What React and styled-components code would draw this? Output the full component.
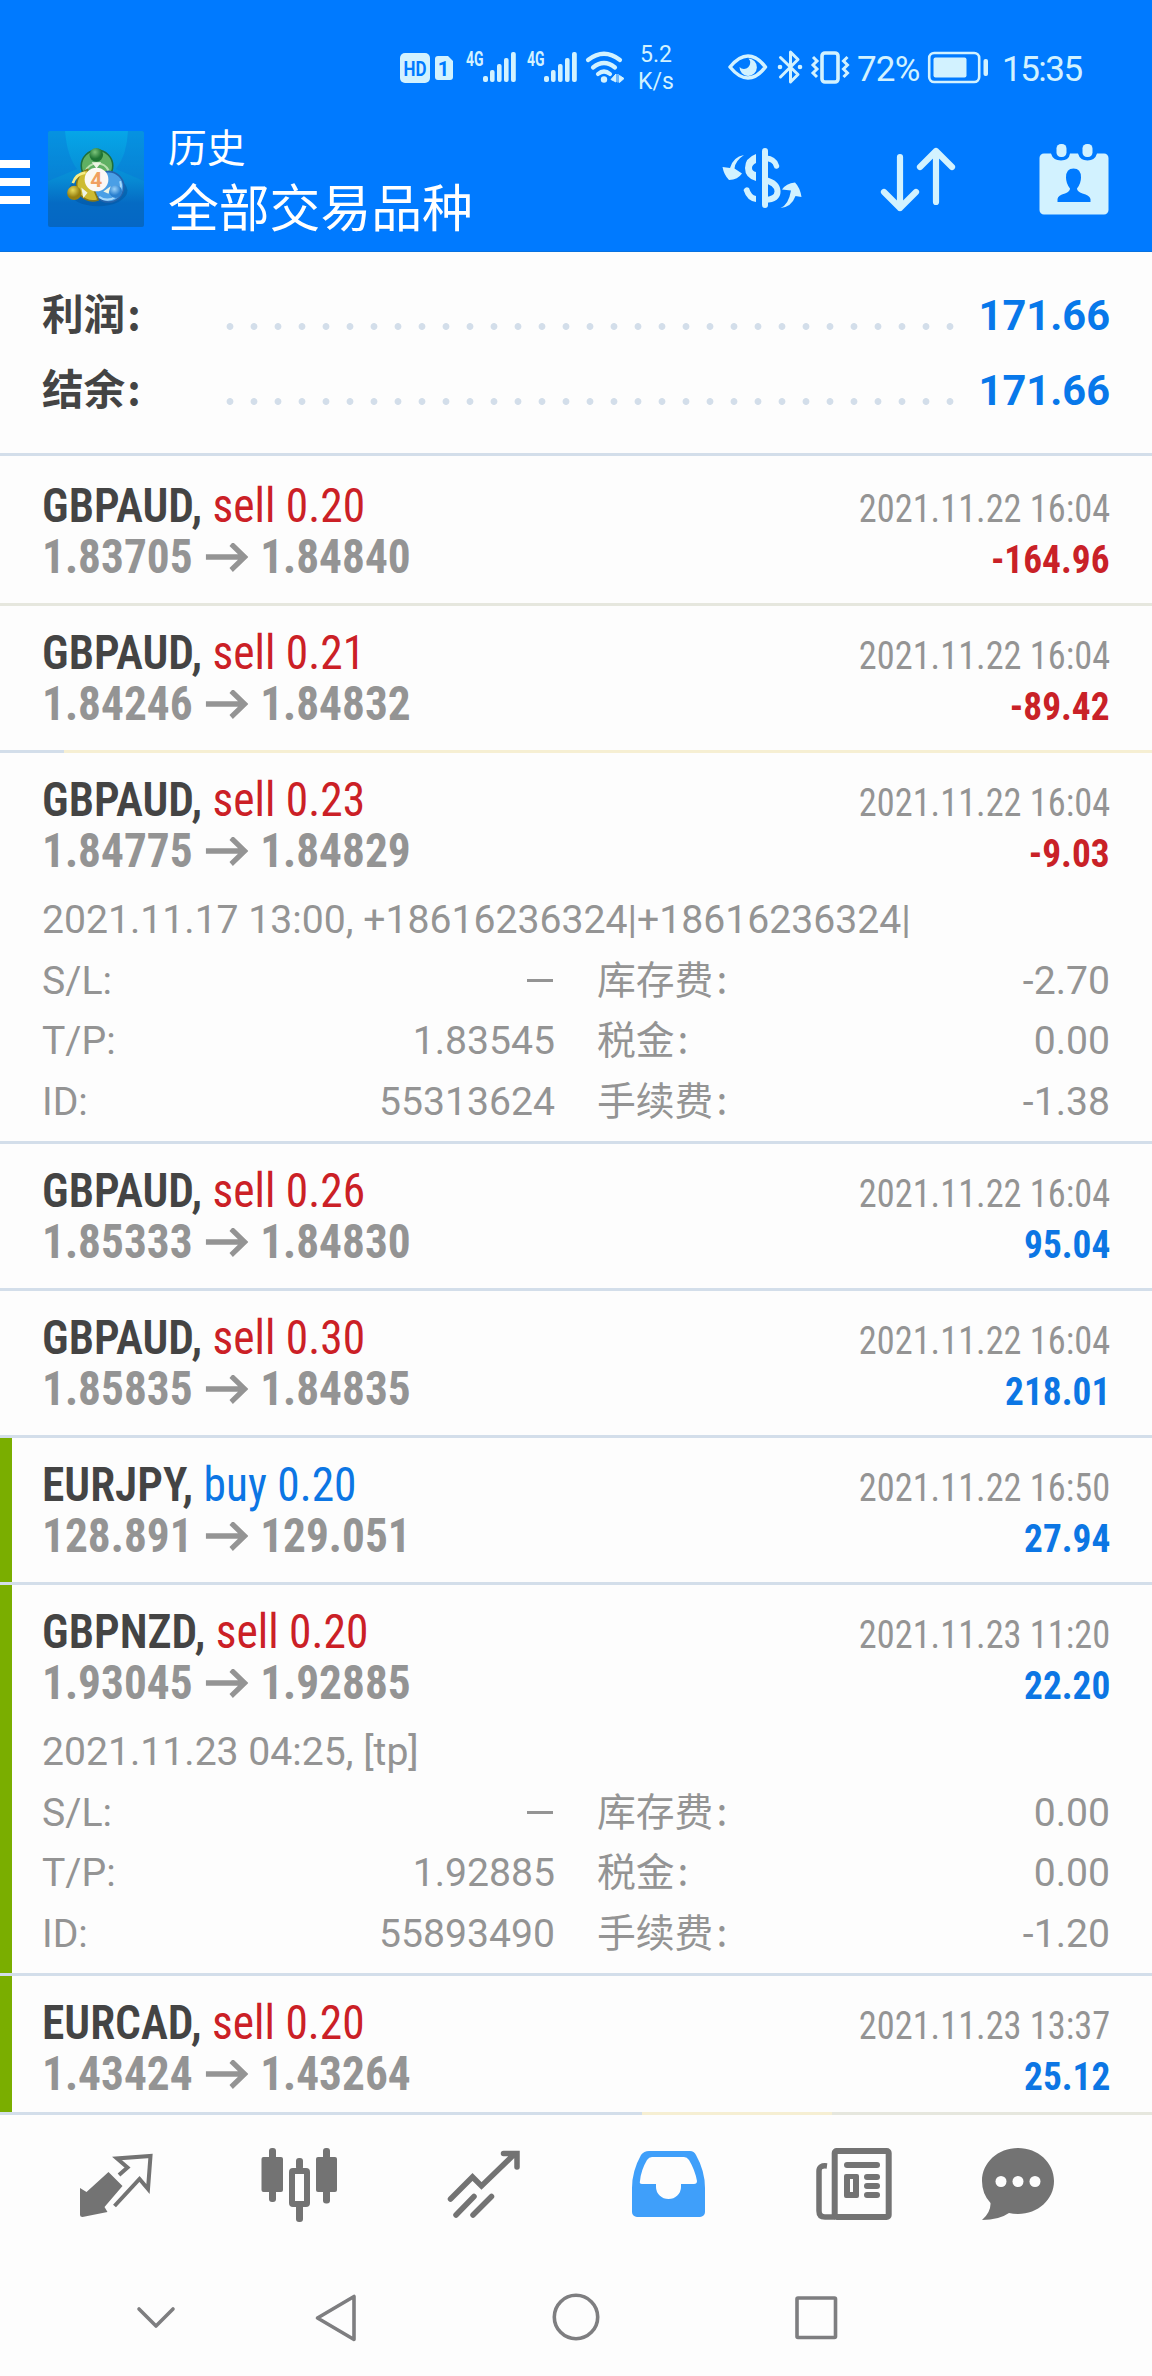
import React from "react";
import styled, { createGlobalStyle } from "styled-components";

const BLUE = "#007aff";
const ICE = "#d2f2ff";
const GREY = "#949494";
const LINE = "#d3deea";
const SAND = "#f6efd3";
const latin = `Roboto, "Noto Sans CJK SC", sans-serif`;
const cjk = `"Noto Sans CJK SC", Roboto, sans-serif`;

const Global = createGlobalStyle`
  *, *::before, *::after { box-sizing: border-box; }
  body { margin: 0; background: #fdfdfd; font-family: ${latin}; }
  svg { display: block; flex: none; }
`;

const Screen = styled.div`
  width: 1152px;
  height: 2376px;
  display: flex;
  flex-direction: column;
  overflow: hidden;
  background: #fdfdfd;
`;

/* ---------- top area ---------- */
const Top = styled.header`
  flex: none;
  height: 252px;
  background: ${BLUE};
  border-bottom: 1px solid #0872e0;
`;
const StatusBar = styled.div`
  height: 126px;
  display: flex;
  align-items: flex-start;
  padding: 40px 0 0 400px;
  color: ${ICE};
`;
const Speed = styled.div`
  width: 38px;
  margin: 1px 50px 0 9px;
  font-size: 23px;
  line-height: 27px;
  text-align: center;
`;
const StatusText = styled.span`
  margin-left: ${(p) => p.$gap}px;
  width: ${(p) => p.$w}px;
  font-size: 35px;
  line-height: 59px;
  letter-spacing: ${(p) => p.$ls}px;
  white-space: nowrap;
`;
const AppBar = styled.div`
  height: 125px;
  display: flex;
  align-items: flex-start;
`;
const Menu = styled.div`
  width: 30px;
  padding-top: 34px;
  display: flex;
  flex-direction: column;
  gap: 10px;
`;
const MenuBar = styled.span`
  height: 8px;
  background: #fff;
`;
const Logo = styled.div`
  width: 96px;
  height: 96px;
  margin: 5px 0 0 18px;
`;
const Titles = styled.div`
  width: 532px;
  margin-left: 24px;
  color: #fff;
  font-family: ${cjk};
  white-space: nowrap;
`;
const Subtitle = styled.div`
  font-size: 38.8px;
  line-height: 38px;
`;
const Title = styled.div`
  padding-top: 5px;
  font-size: 50.8px;
  line-height: 72px;
`;
const Actions = styled.div`
  flex: 1;
  display: flex;
  height: 125px;
`;

/* ---------- summary ---------- */
const Summary = styled.section`
  flex: none;
  height: 204px;
  padding: 26px 42px 0;
  border-bottom: 3px solid ${LINE};
`;
const SummaryRow = styled.div`
  height: 75px;
  display: flex;
  align-items: baseline;
  line-height: 75px;
  font-weight: 700;
  font-size: 41.6px;
`;
const SummaryLabel = styled.span`
  width: 176px;
  color: #444;
  font-family: ${cjk};
  line-height: 60px;
`;
const Colon = styled.span`
  margin-left: ${(p) => p.$gap}px;
`;
const Dots = styled.span`
  width: 744px;
  height: 7px;
  margin-bottom: 11px;
  background: radial-gradient(circle at 12px 3.5px, ${LINE} 3px, transparent 3.8px) 0 0 / 24px 7px repeat-x;
`;
const SummaryValue = styled.span`
  flex: 1;
  text-align: right;
  color: #0878ea;
  font-weight: 700;
`;

/* ---------- deals ---------- */
const List = styled.main`
  flex: none;
  height: 1656px;
  overflow: hidden;
`;
const Deal = styled.article`
  display: flex;
  height: ${(p) => (p.$open ? 391 : 147)}px;
  border-top: 3px solid ${(p) => p.$line};
  border-image: ${(p) => p.$split || "none"};
`;
const Marker = styled.span`
  flex: none;
  width: 12px;
  background: ${(p) => (p.$on ? "#7aae00" : "transparent")};
`;
const DealBody = styled.div`
  flex: 1;
  padding: 21px 42px 0 30px;
`;
const Line = styled.div`
  display: flex;
  justify-content: space-between;
  align-items: baseline;
  height: 51px;
  line-height: 51px;
  font-stretch: 75%;
  white-space: nowrap;
`;
const Symbol = styled.span`
  font-size: 49px;
  font-weight: 650;
  color: #444;
  transform: scaleX(0.927);
  transform-origin: left;
`;
const Side = styled.span`
  font-weight: 400;
  color: ${(p) => (p.$buy ? "#0c76e4" : "#cb2026")};
`;
const Price = styled.span`
  display: flex;
  align-items: baseline;
  font-size: 49px;
  font-weight: 700;
  color: ${GREY};
  transform: scaleX(0.925);
  transform-origin: left;
`;
const PriceArrow = styled.svg`
  width: 46px;
  height: 30px;
  margin: 0 13px 0 14px;
`;
const Time = styled.span`
  font-size: 39.5px;
  color: ${GREY};
  transform: scaleX(0.92);
  transform-origin: right;
`;
const Profit = styled.span`
  font-size: 39.5px;
  font-weight: 700;
  color: ${(p) => (p.$loss ? "#c92127" : "#0c76e4")};
  transform: scaleX(0.945);
  transform-origin: right;
`;
const Details = styled.div`
  padding-top: 14px;
  font-size: 39.15px;
  color: ${GREY};
`;
const Comment = styled.div`
  height: 60.5px;
  line-height: 60.5px;
  white-space: nowrap;
`;
const DetailGrid = styled.div`
  display: grid;
  grid-template-columns: 513px 513px;
  grid-auto-rows: 60.7px;
  column-gap: 42px;
`;
const Field = styled.div`
  display: flex;
  justify-content: space-between;
  align-items: baseline;
  line-height: 61px;
`;
const FieldLabel = styled.span`
  font-family: ${(p) => (p.$cjk ? cjk : latin)};
  font-size: ${(p) => (p.$cjk ? 38.8 : 39.15)}px;
  line-height: ${(p) => (p.$cjk ? 50 : 61)}px;
`;
const Dash = styled.span`
  width: 26px;
  height: 3px;
  margin-right: 2px;
  align-self: center;
  background: ${GREY};
`;

/* ---------- bottom ---------- */
const Tabs = styled.nav`
  flex: none;
  height: 133px;
  display: flex;
  padding-left: 24px;
  border-top: 3px solid;
  border-image: linear-gradient(90deg, ${LINE} 642px, ${SAND} 642px, ${SAND} 832px, #e6e7de 832px) 3 0 0 0;
`;
const SystemNav = styled.nav`
  flex: none;
  height: 131px;
  display: flex;
  justify-content: center;
`;

const Cell = ({ x, y, w, h, children }) => (
  <svg width={w} height={h} viewBox={`${x} ${y} ${w} ${h}`} fill="none">{children}</svg>
);

const Bars = ({ x }) => (
  <g fill={ICE}>
    <text x={x} y="66" fontSize="20" fontWeight="700" fontFamily="Roboto, sans-serif" textLength="17.5" lengthAdjust="spacingAndGlyphs">4G</text>
    <rect x={x + 17} y="76" width="5" height="6" rx="2" />
    <rect x={x + 24} y="70" width="4.6" height="12" rx="2" />
    <rect x={x + 31} y="64" width="4.6" height="18" rx="2" />
    <rect x={x + 38} y="58" width="4.6" height="24" rx="2" />
    <rect x={x + 45} y="52" width="4.8" height="30" rx="2" />
  </g>
);

const Connectivity = () => (
  <Cell x={400} y={40} w={228} h={50}>
    <rect x="400" y="53" width="30" height="30" rx="5" fill={ICE} />
    <text x="403.5" y="75.5" fontSize="20" fontWeight="700" fill={BLUE} fontFamily="Roboto, sans-serif" textLength="23" lengthAdjust="spacingAndGlyphs">HD</text>
    <path d="M438 56h10l5 5v16a3 3 0 0 1-3 3h-12a3 3 0 0 1-3-3V59a3 3 0 0 1 3-3z" fill={ICE} />
    <text x="443.5" y="75.5" fontSize="20" fontWeight="700" fill={BLUE} fontFamily="Roboto, sans-serif" textAnchor="middle">1</text>
    <Bars x={466} />
    <Bars x={527} />
    <g stroke={ICE} strokeWidth="4.2" strokeLinecap="round">
      <path d="M588 60Q604 47.500 620 60" />
      <path d="M593 67.500Q604 58.500 615 67.500" />
      <path d="M598 74Q604 69 610 74" />
    </g>
    <circle cx="604" cy="79.500" r="3.200" fill={ICE} />
    <path d="M611 79.500l5-5.500v8zM618 74v8.500M619.500 75.500l4.500 3-4.500 4z" fill={ICE} stroke={ICE} strokeWidth="1" />
  </Cell>
);

const Indicators = () => (
  <Cell x={725} y={40} w={127} h={50}>
    <path d="M730 67Q739 56 748 56T765.500 67Q757 78 748 78T730 67z" stroke={ICE} strokeWidth="3.500" strokeLinejoin="round" />
    <path d="M748.500 58.500a8.700 8.700 0 1 1-9 8.500 6 6 0 0 0 9-8.500z" fill={ICE} />
    <path d="M780.500 57.500L798 74.500 790.500 82V52L798 59.500 780.500 77" stroke={ICE} strokeWidth="3" strokeLinejoin="round" strokeLinecap="round" />
    <circle cx="780" cy="67" r="2.300" fill={ICE} />
    <circle cx="800" cy="67" r="2.300" fill={ICE} />
    <rect x="822" y="53" width="16" height="29" rx="3" stroke={ICE} strokeWidth="3.600" />
    <path d="M813 57l4 4-4 4 4 4-4 4 4 4M847.500 57l-4 4 4 4-4 4 4 4-4 4" stroke={ICE} strokeWidth="3" />
  </Cell>
);

const Battery = () => (
  <Cell x={927} y={40} w={63} h={50}>
    <rect x="929.200" y="53" width="50" height="29" rx="5" stroke={ICE} strokeWidth="2.600" />
    <rect x="933.500" y="57.500" width="33" height="20" rx="2" fill={ICE} />
    <rect x="983.500" y="59" width="4.500" height="17" rx="2" fill={ICE} />
  </Cell>
);

const LogoArt = () => (
  <svg width="96" height="96" viewBox="48 131 96 96">
    <defs>
      <linearGradient id="sky" x1="0" y1="0" x2="0" y2="1">
        <stop offset="0" stopColor="#06a6e8" />
        <stop offset="0.500" stopColor="#078bd4" />
        <stop offset="0.750" stopColor="#056bc4" />
        <stop offset="1" stopColor="#0567c4" />
      </linearGradient>
      <radialGradient id="gr" cx="0.400" cy="0.300"><stop offset="0" stopColor="#7cc47a" /><stop offset="1" stopColor="#1f7433" /></radialGradient>
      <radialGradient id="ye" cx="0.400" cy="0.300"><stop offset="0" stopColor="#e9dc5c" /><stop offset="1" stopColor="#978010" /></radialGradient>
      <radialGradient id="bl" cx="0.400" cy="0.300"><stop offset="0" stopColor="#9ad2fa" /><stop offset="1" stopColor="#2a7fcf" /></radialGradient>
    </defs>
    <rect x="48" y="131" width="96" height="96" rx="2" fill="url(#sky)" />
    <path d="M48 131h17q2 25 12 38l-29 12zM144 131h-16q-1 24-12 38l28 12z" fill="#0876d6" opacity="0.400" />
    <g transform="translate(96.500 179.500) scale(1.050) translate(-96.500 -179.500)">
      <ellipse cx="98" cy="190" rx="28" ry="15" fill="#044f96" opacity="0.450" />
      <circle cx="97" cy="166.500" r="15" fill="#5fb063" stroke="#1f6f3c" strokeWidth="1.500" />
      <path d="M86 172a12 12 0 0 1 22-1" stroke="#b9e0ae" strokeWidth="2" fill="none" />
      <circle cx="108" cy="186.500" r="14.500" fill="#4a9fe6" stroke="#2463ac" strokeWidth="1.500" />
      <path d="M119 181a13 13 0 0 1-20 15" stroke="#a5d8fb" strokeWidth="2" fill="none" />
      <path d="M98 199a15 15 0 1 1-10-29l4 14z" fill="#cdbb31" stroke="#877716" strokeWidth="1.500" />
      <path d="M74 183q3-9 12-10" stroke="#f6ec86" strokeWidth="2.500" fill="none" />
      <path d="M92 163h9l-4.500 6zM82 187l6 5-4 5zM108 193l2-7-7 5z" fill="#eef4e4" />
      <circle cx="96.300" cy="156" r="6.500" fill="url(#gr)" />
      <circle cx="75.300" cy="192.300" r="6.800" fill="url(#ye)" />
      <circle cx="114.800" cy="191" r="6" fill="url(#bl)" />
      <circle cx="96.500" cy="179.500" r="11.300" fill="#fbf8f5" />
      <text x="96.300" y="186.500" fontSize="20" fontWeight="700" fill="#f0a060" textAnchor="middle" fontFamily="Roboto, sans-serif">4</text>
    </g>
  </svg>
);

const ActionIcons = () => (
  <>
    <Cell x={700} y={126} w={140} h={125}>
      <g stroke={ICE} strokeWidth="6" strokeLinecap="round">
        <path d="M765 151v54" />
        <path d="M765 158q10 1 11.500 8" strokeWidth="5.500" />
        <path d="M765 180q12 3 12.500 11t-12.500 9" strokeWidth="6" />
      </g>
      <path d="M756 154v9q-4 2-4 5t4 4v9q-11-3-11-13t11-14zM743.500 190q2-4 5.500-2 2 7 7 8v6q-9-1-12.500-12z" fill={ICE} />
      <path d="M744 155q-9 6-9.500 13.500l7.500 5q-4 6-13 6.500-5-5-6.500-13l7.500 1q3-11 14-13zM780.500 208q8-3 10.500-17.500l-9-1q4-6 13-7 5 5 6.500 14.500l-6-1q-4 11-15 12z" fill={ICE} />
    </Cell>
    <Cell x={840} y={126} w={156} h={125}>
      <path d="M900 157v51M884 192l16 16 16-16M936 202v-51M920 167l16-16 16 16" stroke={ICE} strokeWidth="6.200" strokeLinecap="round" strokeLinejoin="round" />
    </Cell>
    <Cell x={996} y={126} w={156} h={125}>
      <path fillRule="evenodd" fill={ICE} d="M1044 153.500h7q2 7 10 7t9-7h8q2 7 9.500 7t9.500-7h7a4.500 4.500 0 0 1 4.500 4.500v52a4.500 4.500 0 0 1-4.500 4.500h-60a4.500 4.500 0 0 1-4.500-4.500v-52a4.500 4.500 0 0 1 4.500-4.500zM1057.500 202h33v-3q-1-4-8-5.500-5.500-2-5.500-5 4-5 4-11 0-9-7.500-9t-7.500 9q0 6 4 11 0 3-5 5-7 1.500-7.500 5.500z" />
      <rect x="1056.500" y="144" width="10" height="13" rx="4.500" fill={ICE} />
      <rect x="1082.500" y="144" width="10" height="13" rx="4.500" fill={ICE} />
    </Cell>
  </>
);

const G = "#737373";
const tab = (i) => ({ x: 24 + 184 * i, y: 2115, w: 184, h: 130 });

const TabIcons = () => (
  <>
    <Cell {...tab(0)}>
      <path d="M80 2188l6.500 4 22-20 14 14-18 21 3 5-25 5q-2.500 0-2.500-2z" fill={G} />
      <path d="M119 2175l8.500-7.500-10.500-9 33.500-2.500-2.500 33-8.500-10-25 27" stroke={G} strokeWidth="4" />
    </Cell>
    <Cell {...tab(1)}>
      <g fill={G}>
        <rect x="261.500" y="2157" width="21.500" height="35" rx="2" />
        <rect x="269" y="2148" width="7" height="54" rx="3" />
        <rect x="316" y="2157" width="21" height="35" rx="2" />
        <rect x="323" y="2148" width="7" height="55.500" rx="3" />
        <rect x="296" y="2158" width="7" height="12" rx="3" />
        <rect x="296" y="2204" width="7" height="18" rx="3" />
      </g>
      <rect x="292" y="2171" width="15" height="33" rx="1" stroke={G} strokeWidth="6" />
    </Cell>
    <Cell {...tab(2)}>
      <path d="M450.500 2199l22-22 9 9 33-32M503.500 2153.500h13.500v13.500M456 2215l18-18.500M473 2215l18.500-18.500" stroke={G} strokeWidth="5.500" strokeLinecap="round" />
    </Cell>
    <Cell {...tab(3)}>
      <path fillRule="evenodd" fill="#3f9ffa" d="M649 2151h41q4 0 6 4 9 16 9 33v24a5 5 0 0 1-5 5h-63a5 5 0 0 1-5-5v-24q0-17 9-33 3-4 8-4zM652 2157q-3 0-5 3-6 10-7 21-1 3 2 3h14v3a12.500 12 0 0 0 25 0v-3h13q3 0 3-3-2-11-8-21-2-3-5-3z" />
    </Cell>
    <Cell {...tab(4)}>
      <g stroke={G} strokeWidth="6" strokeLinejoin="round">
        <rect x="834.700" y="2151" width="54" height="66" rx="2" />
        <path d="M827 2166q-8-1-8 5v40q0 6 6 6h10" strokeWidth="5.500" />
      </g>
      <g fill={G}>
        <rect x="844" y="2162" width="36" height="6" rx="3" />
        <rect x="864" y="2174" width="16" height="6" rx="3" />
        <rect x="864" y="2183" width="16" height="6" rx="3" />
        <rect x="864" y="2192" width="16" height="6" rx="3" />
        <path fillRule="evenodd" d="M846 2174h11q2 0 2 2v20q0 2-2 2h-11q-2 0-2-2v-20q0-2 2-2zM850 2179v13h3v-13z" />
      </g>
    </Cell>
    <Cell {...tab(5)}>
      <path d="M1018 2148c20 0 36 14.500 36 33s-16 33-36 33q-5 0-9-1-10 7-27 7 9-8 8.500-17-8.500-9-8.500-22c0-18.500 16-33 36-33z" fill={G} />
      <g fill="#fdfdfd">
        <circle cx="1001" cy="2181.500" r="5.500" />
        <circle cx="1018" cy="2181.500" r="5.500" />
        <circle cx="1035" cy="2181.500" r="5.500" />
      </g>
    </Cell>
  </>
);

const deals = [
  { s: "GBPAUD", v: "sell 0.20", a: "1.83705", b: "1.84840", t: "2021.11.22 16:04", p: "-164.96", line: "transparent" },
  { s: "GBPAUD", v: "sell 0.21", a: "1.84246", b: "1.84832", t: "2021.11.22 16:04", p: "-89.42", line: "#e6e7de" },
  {
    s: "GBPAUD", v: "sell 0.23", a: "1.84775", b: "1.84829", t: "2021.11.22 16:04", p: "-9.03", line: SAND,
    split: `linear-gradient(90deg, ${LINE} 64px, ${SAND} 64px) 3 0 0 0`,
    note: "2021.11.17 13:00, +18616236324|+18616236324|", tp: "1.83545", id: "55313624", swap: "-2.70", tax: "0.00", fee: "-1.38",
  },
  { s: "GBPAUD", v: "sell 0.26", a: "1.85333", b: "1.84830", t: "2021.11.22 16:04", p: "95.04" },
  { s: "GBPAUD", v: "sell 0.30", a: "1.85835", b: "1.84835", t: "2021.11.22 16:04", p: "218.01" },
  { s: "EURJPY", v: "buy 0.20", a: "128.891", b: "129.051", t: "2021.11.22 16:50", p: "27.94", mark: true },
  {
    s: "GBPNZD", v: "sell 0.20", a: "1.93045", b: "1.92885", t: "2021.11.23 11:20", p: "22.20", mark: true,
    note: "2021.11.23 04:25, [tp]", tp: "1.92885", id: "55893490", swap: "0.00", tax: "0.00", fee: "-1.20",
  },
  { s: "EURCAD", v: "sell 0.20", a: "1.43424", b: "1.43264", t: "2021.11.23 13:37", p: "25.12", mark: true },
];

const DetailField = ({ label, value, chinese }) => (
  <Field>
    <FieldLabel $cjk={chinese}>{label}{chinese && <Colon $gap={3}>:</Colon>}</FieldLabel>
    {value ? <span>{value}</span> : <Dash />}
  </Field>
);

const DealItem = ({ d }) => (
  <Deal $open={!!d.note} $line={d.line || LINE} $split={d.split}>
    <Marker $on={d.mark} />
    <DealBody>
      <Line>
        <Symbol>{d.s}, <Side $buy={d.v.startsWith("buy")}>{d.v}</Side></Symbol>
        <Time>{d.t}</Time>
      </Line>
      <Line>
        <Price>
          {d.a}
          <PriceArrow viewBox="0 0 46 30" fill="none" stroke={GREY} strokeWidth="5.500">
            <path d="M0 14h42M27.500 1l14.500 13-14.500 13" />
          </PriceArrow>
          {d.b}
        </Price>
        <Profit $loss={d.p.startsWith("-")}>{d.p}</Profit>
      </Line>
      {d.note && (
        <Details>
          <Comment>{d.note}</Comment>
          <DetailGrid>
            <DetailField label="S/L:" />
            <DetailField label="库存费" value={d.swap} chinese />
            <DetailField label="T/P:" value={d.tp} />
            <DetailField label="税金" value={d.tax} chinese />
            <DetailField label="ID:" value={d.id} />
            <DetailField label="手续费" value={d.fee} chinese />
          </DetailGrid>
        </Details>
      )}
    </DealBody>
  </Deal>
);

const SummaryItem = ({ label, value }) => (
  <SummaryRow>
    <SummaryLabel>{label}<Colon $gap={2}>:</Colon></SummaryLabel>
    <Dots />
    <SummaryValue>{value}</SummaryValue>
  </SummaryRow>
);

export default function App() {
  return (
    <Screen>
      <Global />
      <Top>
        <StatusBar>
          <Connectivity />
          <Speed>5.2 K/s</Speed>
          <Indicators />
          <StatusText $gap={5} $w={70} $ls={-0.8}>72%</StatusText>
          <Battery />
          <StatusText $gap={12} $w={90} $ls={-1.5}>15:35</StatusText>
        </StatusBar>
        <AppBar>
          <Menu><MenuBar /><MenuBar /><MenuBar /></Menu>
          <Logo><LogoArt /></Logo>
          <Titles>
            <Subtitle>历史</Subtitle>
            <Title>全部交易品种</Title>
          </Titles>
          <Actions><ActionIcons /></Actions>
        </AppBar>
      </Top>
      <Summary>
        <SummaryItem label="利润" value="171.66" />
        <SummaryItem label="结余" value="171.66" />
      </Summary>
      <List>
        {deals.map((d, i) => <DealItem key={i} d={d} />)}
      </List>
      <Tabs><TabIcons /></Tabs>
      <SystemNav>
        <Cell x={96} y={2245} w={960} h={131}>
          <g stroke="#7e7e80" strokeWidth="3.600" strokeLinecap="round" strokeLinejoin="round">
            <path d="M139 2309l17 17 17-17" />
            <path d="M317.500 2318l36.500-21.500v43z" />
            <circle cx="576" cy="2317" r="21.700" />
            <rect x="797" y="2298" width="38.500" height="39.500" rx="1" />
          </g>
        </Cell>
      </SystemNav>
    </Screen>
  );
}
